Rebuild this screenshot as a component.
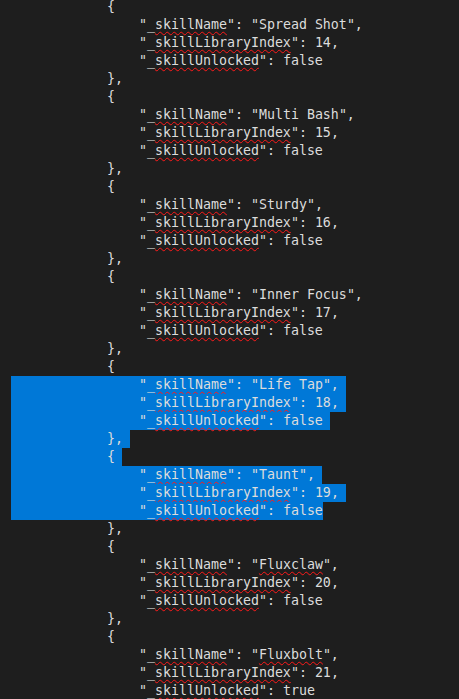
import React from 'react';

type Skill = {
  name: string;
  index: number;
  unlocked: boolean;
  flagged?: boolean;
};

type Sel = 'none' | 'line' | 'end';

const skills: Skill[] = [
  { name: 'Spread Shot', index: 14, unlocked: false },
  { name: 'Multi Bash', index: 15, unlocked: false },
  { name: 'Sturdy', index: 16, unlocked: false },
  { name: 'Inner Focus', index: 17, unlocked: false },
  { name: 'Life Tap', index: 18, unlocked: false },
  { name: 'Taunt', index: 19, unlocked: false },
  { name: 'Fluxclaw', index: 20, unlocked: false, flagged: true },
  { name: 'Fluxbolt', index: 21, unlocked: true, flagged: true },
];

// spell-check underline
const Squiggle: React.FC<{ children: React.ReactNode }> = ({ children }) => (
  <span className="underline decoration-wavy decoration-[#ff1a1a] decoration-1 underline-offset-[2px] [text-decoration-skip-ink:none]">
    {children}
  </span>
);

const Key: React.FC<{ word: string }> = ({ word }) => (
  <>
    "_<Squiggle>{word}</Squiggle>"
  </>
);

const Line: React.FC<{ indent: number; sel?: Sel; children: React.ReactNode }> = ({
  indent,
  sel = 'none',
  children,
}) => (
  <div className="h-[18px] leading-[18px] whitespace-pre">
    <span className={`inline-block h-[18px] align-top ${sel !== 'none' ? 'bg-[#0078d7]' : ''}`}>
      {' '.repeat(indent)}
      {children}
      {sel === 'line' && <span className="inline-block w-[7px]" />}
    </span>
  </div>
);

export default function App() {
  const rows: React.ReactNode[] = [];

  skills.forEach((s, i) => {
    const inLifeTap = i === 4;
    const inTaunt = i === 5;
    const last = i === skills.length - 1;

    rows.push(
      <Line key={`${i}-open`} indent={12} sel={inTaunt ? 'line' : 'none'}>
        {'{'}
      </Line>
    );
    rows.push(
      <Line key={`${i}-name`} indent={16} sel={inLifeTap || inTaunt ? 'line' : 'none'}>
        <Key word="skillName" />: "{s.flagged ? <Squiggle>{s.name}</Squiggle> : s.name}",
      </Line>
    );
    rows.push(
      <Line key={`${i}-index`} indent={16} sel={inLifeTap || inTaunt ? 'line' : 'none'}>
        <Key word="skillLibraryIndex" />: {s.index},
      </Line>
    );
    rows.push(
      <Line key={`${i}-unlocked`} indent={16} sel={inLifeTap ? 'line' : inTaunt ? 'end' : 'none'}>
        <Key word="skillUnlocked" />: {s.unlocked ? 'true' : 'false'}
      </Line>
    );
    if (!last) {
      rows.push(
        <Line key={`${i}-close`} indent={12} sel={inLifeTap ? 'line' : 'none'}>
          {'},'}
        </Line>
      );
    }
  });

  return (
    <div className="h-[699px] w-[459px] overflow-hidden bg-[#1e1e1e]">
      <div
        className="-mt-[2px] pl-[11px] text-[13.29px] text-[#dcdcdc]"
        style={{ fontFamily: '"DejaVu Sans Mono", "Liberation Mono", monospace' }}
      >
        {rows}
      </div>
    </div>
  );
}
